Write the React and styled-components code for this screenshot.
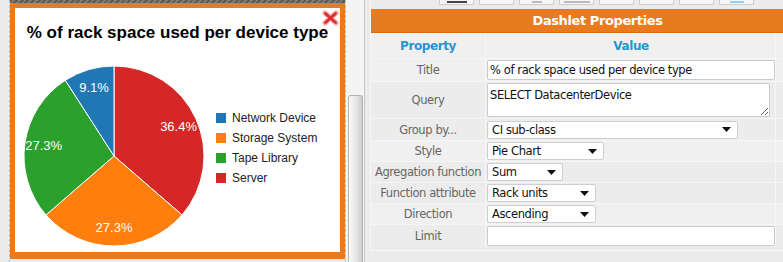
import React from 'react';
import styled, { createGlobalStyle } from 'styled-components';

const ORANGE = '#e87b1f';
const PANEL_FONT = '"DejaVu Sans", Tahoma, sans-serif';
const CHART_FONT = '"Liberation Sans", Arial, sans-serif';

const GlobalStyle = createGlobalStyle`
    html, body {
        margin: 0;
        padding: 0;
        background: #ebebeb;
        overflow: hidden;
    }
`;

const Page = styled.div`
    display: flex;
    width: 783px;
    height: 262px;
    overflow: hidden;
`;

const DashletColumn = styled.div`
    flex: none;
    padding-left: 9px;
`;

const DashletFrame = styled.div`
    display: flex;
    flex-direction: column;
    width: 335px;
    height: 262px;
    border-left: 1px dashed #bcbcbc;
    border-right: 1px dashed #bcbcbc;
`;

const Hatch = styled.div`
    height: 3px;
    background: repeating-linear-gradient(135deg, #5b5b5b 0 2px, #797979 2px 4px);
`;

const Dashlet = styled.div`
    position: relative;
    display: flex;
    flex-direction: column;
    height: 244px;
    background: #fff;
    border: 5px solid ${ORANGE};
    border-bottom-width: 7px;
`;

const DashletTitle = styled.h2`
    margin: 14px 0 0;
    text-align: center;
    font: bold 17px/22px ${CHART_FONT};
    color: #000;
`;

const CloseButton = styled.button`
    position: absolute;
    top: 2px;
    right: 1px;
    width: 17px;
    height: 16px;
    padding: 0;
    border: none;
    background: none;
`;

const ChartRow = styled.div`
    display: flex;
    margin-top: 22px;
    padding-left: 9px;
`;

const Legend = styled.ul`
    margin: 42px 0 0 12px;
    padding: 0;
    list-style: none;
`;

const LegendItem = styled.li`
    display: flex;
    align-items: center;
    gap: 6px;
    height: 20px;
    font: 12px ${CHART_FONT};
    color: #222;
`;

const Swatch = styled.span`
    width: 10px;
    height: 10px;
    background: ${props => props.$color};
`;

const ScrollTrack = styled.div`
    flex: none;
    display: flex;
    flex-direction: column;
    align-items: center;
    width: 18px;
    background: #f4f4f4;
    border-right: 1px solid #c6c6c6;
`;

const ScrollThumb = styled.div`
    flex: 1;
    width: 13px;
    margin-top: 95px;
    border: 1px solid #b4b4b4;
    border-bottom: none;
    border-radius: 3px 3px 0 0;
    background: linear-gradient(to right, #fafafa, #e4e4e4 60%, #cdcdcd);
`;

const PropertiesPanel = styled.div`
    flex: none;
    display: flex;
    flex-direction: column;
    width: 453px;
    height: 250px;
    margin-left: 5px;
    border-left: 1px solid #f8f8f8;
    border-bottom: 1px solid #f8f8f8;
    font-family: ${PANEL_FONT};
`;

const Toolbar = styled.div`
    display: flex;
    align-items: flex-end;
    gap: 5px;
    height: 9px;
    padding: 0 0 4px 68px;
    box-sizing: border-box;
    overflow: hidden;
`;

const ToolButton = styled.div`
    flex: none;
    width: 33px;
    height: 20px;
    border: 1px solid #cdcdcd;
    background: #f6f6f6;
    display: flex;
    align-items: flex-end;
    justify-content: center;
`;

const ToolGlyph = styled.span`
    width: ${props => props.$w}px;
    height: 2px;
    margin-bottom: 1px;
    background: ${props => props.$color};
`;

const PanelHeader = styled.div`
    height: 24px;
    background: ${ORANGE};
    border-bottom: 1px solid #d96a12;
    box-sizing: border-box;
    color: #fff;
    font: bold 13px/24px ${PANEL_FONT};
    letter-spacing: -0.4px;
    text-align: center;
`;

const PropRow = styled.div`
    display: grid;
    grid-template-columns: 115px 290px 1fr;
    height: ${props => props.$h}px;
    background: ${props => (props.$light ? '#f0f0f0' : '#ececec')};
    border-top: 1px solid #f6f6f6;
    box-sizing: border-box;
`;

const LabelCell = styled.div`
    display: flex;
    align-items: center;
    justify-content: center;
    border-right: 1px solid #f7f7f7;
    color: ${props => (props.$head ? '#2b93cc' : '#666')};
    font-size: ${props => (props.$head ? 12 : 11.5)}px;
    font-weight: ${props => (props.$head ? 'bold' : 'normal')};
    letter-spacing: -0.4px;
    white-space: nowrap;
`;

const ValueCell = styled.div`
    display: flex;
    align-items: center;
    justify-content: ${props => (props.$head ? 'center' : 'flex-start')};
    padding-left: 1px;
    border-right: 1px solid #f7f7f7;
    color: #2b93cc;
    font-size: 12px;
    font-weight: ${props => (props.$head ? 'bold' : 'normal')};
    letter-spacing: -0.4px;
`;

const SpareCell = styled.div``;

const TextInput = styled.input`
    box-sizing: border-box;
    width: ${props => props.$w}px;
    height: ${props => props.$h}px;
    margin: 0;
    padding: 0 2px;
    border: 1px solid #cbcbcb;
    border-radius: 2px;
    background: #fff;
    font: 11.5px ${PANEL_FONT};
    letter-spacing: -0.4px;
    color: #111;
    outline: none;
`;

const QueryArea = styled.textarea`
    box-sizing: border-box;
    width: 283px;
    height: 34px;
    margin: 0;
    padding: 4px 2px 2px;
    border: 1px solid #cbcbcb;
    border-radius: 2px;
    background: #fff;
    font: 11.5px/14px ${PANEL_FONT};
    letter-spacing: -0.4px;
    color: #111;
    resize: vertical;
    outline: none;
`;

const SelectBox = styled.div`
    box-sizing: border-box;
    display: flex;
    align-items: center;
    justify-content: space-between;
    width: ${props => props.$w}px;
    height: 18px;
    padding: 0 6px 0 4px;
    border: 1px solid #cfcfcf;
    border-radius: 2px;
    background: #fff;
    font-size: 11.5px;
    letter-spacing: -0.4px;
    color: #111;
`;

const slices = [
    { label: 'Server', value: 36.4, color: '#d62728' },
    { label: 'Storage System', value: 27.3, color: '#ff7f0e' },
    { label: 'Tape Library', value: 27.3, color: '#2ca02c' },
    { label: 'Network Device', value: 9.1, color: '#1f77b4' }
];

const legendOrder = ['Network Device', 'Storage System', 'Tape Library', 'Server'];

function point(cx, cy, r, turn) {
    const a = turn * Math.PI * 2;
    return [cx + r * Math.sin(a), cy - r * Math.cos(a)];
}

function PieChart() {
    const total = slices.reduce((sum, s) => sum + s.value, 0);
    const c = 90;
    const r = 90;
    let start = 0;

    return <svg width="180" height="180" viewBox="0 0 180 180">
        {slices.map(slice => {
            const end = start + slice.value / total;
            const [x0, y0] = point(c, c, r, start);
            const [x1, y1] = point(c, c, r, end);
            const [lx, ly] = point(c, c, 71, (start + end) / 2);
            const large = end - start > 0.5 ? 1 : 0;
            start = end;
            return <g key={slice.label}>
                <path d={`M${c},${c} L${x0},${y0} A${r},${r} 0 ${large} 1 ${x1},${y1} Z`}
                    fill={slice.color} stroke="#fff" strokeWidth="1" />
                <text x={lx} y={ly} fill="#fff" fontSize="13" fontFamily={CHART_FONT}
                    textAnchor="middle" dominantBaseline="central">{slice.value.toFixed(1)}%</text>
            </g>;
        })}
    </svg>;
}

function CloseIcon() {
    return <svg width="17" height="16" viewBox="0 0 17 16">
        <path d="M3,3 L14,13 M14,3 L3,13" stroke="#f6b3b3" strokeWidth="5.5" strokeLinecap="round" />
        <path d="M3.5,3.5 L13.5,12.5 M13.5,3.5 L3.5,12.5" stroke="#de2c2f" strokeWidth="3" strokeLinecap="round" />
    </svg>;
}

function Arrow() {
    return <svg width="9" height="5" viewBox="0 0 9 5">
        <path d="M0,0 L9,0 L4.5,5 Z" fill="#111" />
    </svg>;
}

const toolGlyphs = [
    { w: 20, color: '#444' }, null, { w: 10, color: '#bbb' }, { w: 26, color: '#bbb' },
    null, null, null, { w: 14, color: '#8fd0f0' }
];

const selects = [
    { label: 'Group by...', value: 'CI sub-class', width: 251, h: 22 },
    { label: 'Style', value: 'Pie Chart', width: 117, h: 21, light: true },
    { label: 'Agregation function', value: 'Sum', width: 76, h: 21 },
    { label: 'Function attribute', value: 'Rack units', width: 109, h: 21 },
    { label: 'Direction', value: 'Ascending', width: 109, h: 21, light: true }
];

export default function App() {
    return <Page>
        <GlobalStyle />
        <DashletColumn>
            <DashletFrame>
                <Hatch />
                <Dashlet>
                    <CloseButton aria-label="Remove dashlet"><CloseIcon /></CloseButton>
                    <DashletTitle>% of rack space used per device type</DashletTitle>
                    <ChartRow>
                        <PieChart />
                        <Legend>
                            {legendOrder.map(name => {
                                const slice = slices.find(s => s.label === name);
                                return <LegendItem key={name}>
                                    <Swatch $color={slice.color} />
                                    {name}
                                </LegendItem>;
                            })}
                        </Legend>
                    </ChartRow>
                </Dashlet>
            </DashletFrame>
        </DashletColumn>
        <ScrollTrack>
            <ScrollThumb />
        </ScrollTrack>
        <PropertiesPanel>
            <Toolbar>
                {toolGlyphs.map((glyph, index) => <ToolButton key={index}>
                    {glyph && <ToolGlyph $w={glyph.w} $color={glyph.color} />}
                </ToolButton>)}
            </Toolbar>
            <PanelHeader>Dashlet Properties</PanelHeader>
            <PropRow $h={25} $light>
                <LabelCell $head>Property</LabelCell>
                <ValueCell $head>Value</ValueCell>
                <SpareCell />
            </PropRow>
            <PropRow $h={23} $light>
                <LabelCell>Title</LabelCell>
                <ValueCell>
                    <TextInput $w={288} $h={20} defaultValue="% of rack space used per device type" />
                </ValueCell>
                <SpareCell />
            </PropRow>
            <PropRow $h={37}>
                <LabelCell>Query</LabelCell>
                <ValueCell>
                    <QueryArea defaultValue="SELECT DatacenterDevice" />
                </ValueCell>
                <SpareCell />
            </PropRow>
            {selects.map(item => <PropRow key={item.label} $h={item.h} $light={item.light}>
                <LabelCell>{item.label}</LabelCell>
                <ValueCell>
                    <SelectBox $w={item.width}>
                        <span>{item.value}</span>
                        <Arrow />
                    </SelectBox>
                </ValueCell>
                <SpareCell />
            </PropRow>)}
            <PropRow $h={23}>
                <LabelCell>Limit</LabelCell>
                <ValueCell>
                    <TextInput $w={288} $h={20} defaultValue="" />
                </ValueCell>
                <SpareCell />
            </PropRow>
        </PropertiesPanel>
    </Page>;
}
